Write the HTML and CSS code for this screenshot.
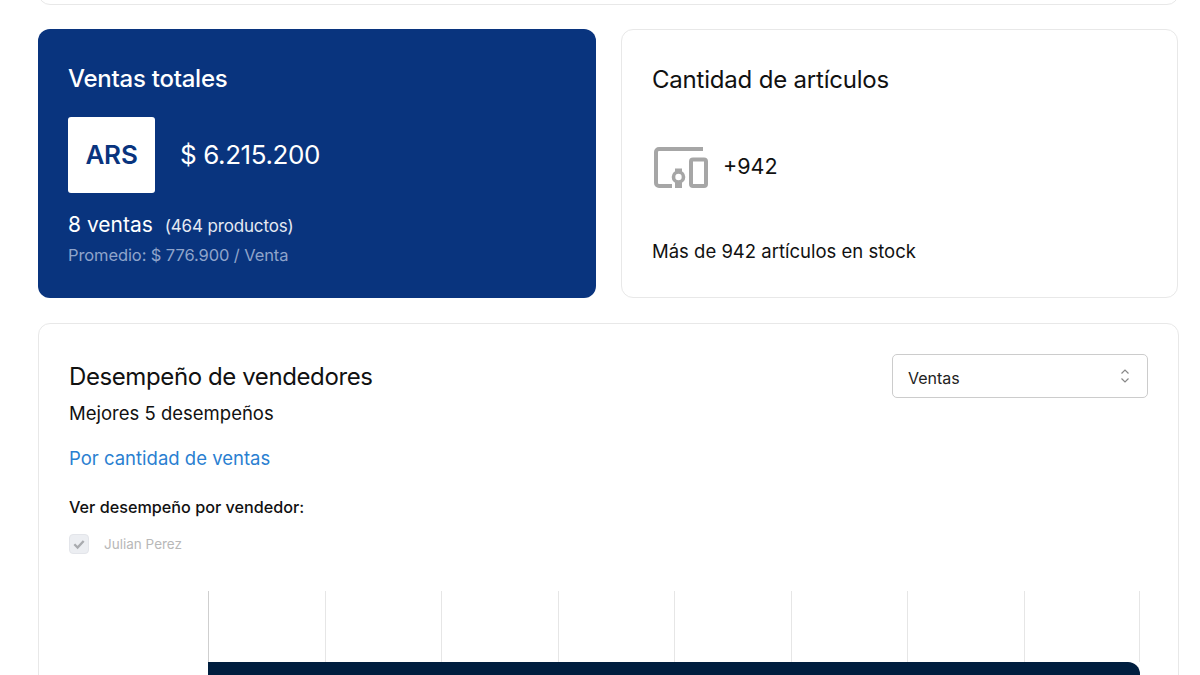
FILE: index.html
```html
<!DOCTYPE html>
<html lang="es">

<head>
    <meta charset="UTF-8" />
    <meta name="viewport" content="width=device-width, initial-scale=1.0" />
    <title>Dashboard</title>
    <link rel="stylesheet" href="styles.css">
</head>

<body>
    <div class="page">
        <!-- Card cut off by the top of the window -->
        <div class="card top-card"></div>

        <div class="summary-row">
            <div class="card sales-card">
                <h2 class="sales-title">Ventas totales</h2>
                <div class="sales-amount">
                    <div class="currency-box">ARS</div>
                    <span class="amount">$ 6.215.200</span>
                </div>
                <p class="sales-count">8 ventas <span class="sales-products">(464 productos)</span></p>
                <p class="sales-average">Promedio: $ 776.900 / Venta</p>
            </div>

            <div class="card stock-card">
                <h2 class="stock-title">Cantidad de artículos</h2>
                <div class="stock-amount">
                    <svg class="stock-icon" viewBox="0 0 54 41" width="54" height="41" aria-hidden="true">
                        <path d="M49 2H5a3 3 0 0 0-3 3v31a3 3 0 0 0 3 3h13" fill="none" stroke="#a6a6a6" stroke-width="4" />
                        <rect x="37" y="12.5" width="15" height="26.5" rx="2" fill="none" stroke="#a6a6a6" stroke-width="4" />
                        <circle cx="24.5" cy="30" r="5" fill="none" stroke="#a6a6a6" stroke-width="3.6" />
                        <rect x="21" y="21.5" width="7" height="4" fill="#a6a6a6" />
                        <rect x="21" y="35" width="7" height="6" fill="#a6a6a6" />
                    </svg>
                    <span class="stock-count">+942</span>
                </div>
                <p class="stock-text">Más de 942 artículos en stock</p>
            </div>
        </div>

        <div class="card sellers-card">
            <div class="sellers-header">
                <div>
                    <h2 class="sellers-title">Desempeño de vendedores</h2>
                    <p class="sellers-subtitle">Mejores 5 desempeños</p>
                </div>
                <div class="select-box">
                    <span class="select-value">Ventas</span>
                    <svg viewBox="0 0 10 16" width="10" height="16" aria-hidden="true">
                        <path d="M1.5 5.5 5 2l3.5 3.5M1.5 10.5 5 14l3.5-3.5" fill="none" stroke="#888" stroke-width="1.2" />
                    </svg>
                </div>
            </div>

            <a class="sellers-link" href="#">Por cantidad de ventas</a>

            <p class="filter-label">Ver desempeño por vendedor:</p>
            <label class="filter-option">
                <span class="checkbox">
                    <svg viewBox="0 0 12 12" width="14" height="14" aria-hidden="true">
                        <path d="M2 6.2 4.8 9 10 3.4" fill="none" stroke="#a9abaf" stroke-width="2" />
                    </svg>
                </span>
                Julian Perez
            </label>

            <div class="chart">
                <div class="chart-cell"></div>
                <div class="chart-cell"></div>
                <div class="chart-cell"></div>
                <div class="chart-cell"></div>
                <div class="chart-cell"></div>
                <div class="chart-cell"></div>
                <div class="chart-cell"></div>
                <div class="chart-cell chart-cell-last"></div>
                <div class="chart-bar"></div>
            </div>
        </div>
    </div>
</body>

</html>
```

FILE: styles.css
```css
html,
body {
    height: 675px;
    overflow: hidden;
}

body {
    margin: 0;
    font-family: Inter, "Open Sans", Arial, sans-serif;
    background-color: white;
    color: #111;
}

h2,
p {
    margin: 0;
    font-weight: 400;
}

.page {
    padding: 0 21px 0 38px;
}

.card {
    box-sizing: border-box;
    border: 1px solid #e8e8e8;
    border-radius: 12px;
    background-color: white;
}

.top-card {
    height: 30px;
    margin-top: -25px;
    margin-bottom: 24px;
}

.summary-row {
    display: grid;
    grid-template-columns: 558px 557px;
    gap: 25px;
    margin-bottom: 25px;
}

/* Ventas totales */
.sales-card {
    height: 269px;
    padding: 36px 30px 0;
    border: none;
    background-color: #09347e;
    color: white;
}

.sales-title {
    font-size: 24px;
    line-height: 28px;
    font-weight: 500;
    letter-spacing: -0.25px;
}

.sales-amount {
    display: flex;
    align-items: center;
    gap: 25px;
    margin-top: 24px;
}

.currency-box {
    width: 87px;
    height: 76px;
    border-radius: 3px;
    background-color: white;
    color: #09347e;
    font-size: 26px;
    font-weight: 600;
    line-height: 76px;
    text-align: center;
    letter-spacing: -0.2px;
}

.amount {
    margin-top: -2px;
    font-size: 26px;
    letter-spacing: -0.4px;
}

.sales-count {
    margin-top: 19px;
    font-size: 21px;
    line-height: 26px;
}

.sales-products {
    margin-left: 6px;
    font-size: 17px;
    color: #e4e9f3;
    letter-spacing: -0.15px;
}

.sales-average {
    margin-top: 5px;
    font-size: 16.5px;
    line-height: 22px;
    color: #8fa4cb;
    letter-spacing: -0.1px;
}

/* Cantidad de articulos */
.stock-card {
    height: 269px;
    padding: 36px 30px 0;
}

.stock-title {
    font-size: 24px;
    line-height: 28px;
    font-weight: 400;
    letter-spacing: -0.2px;
}

.stock-amount {
    display: flex;
    align-items: center;
    gap: 15px;
    margin-top: 53px;
    margin-left: 2px;
    font-size: 21.5px;
}

.stock-count {
    margin-bottom: 4px;
}

.stock-text {
    margin-top: 50px;
    font-size: 18.5px;
    line-height: 26px;
}

/* Desempeno de vendedores */
.sellers-card {
    height: 500px;
    padding: 30px 30px 0;
}

.sellers-header {
    display: flex;
    justify-content: space-between;
    align-items: flex-start;
}

.sellers-title {
    margin-top: 8px;
    font-size: 24px;
    line-height: 30px;
    letter-spacing: -0.4px;
}

.sellers-subtitle {
    margin-top: 9px;
    font-size: 18.5px;
    line-height: 24px;
}

.select-box {
    box-sizing: border-box;
    display: flex;
    justify-content: space-between;
    align-items: center;
    width: 256px;
    height: 44px;
    padding: 0 17px 0 15px;
    border: 1px solid #ccc;
    border-radius: 5px;
    font-size: 16px;
    color: #222;
}

.select-value {
    margin-top: 3px;
}

.sellers-link {
    display: block;
    margin-top: 21px;
    font-size: 18.5px;
    line-height: 24px;
    color: #2a7fd1;
    text-decoration: none;
}

.filter-label {
    margin-top: 26px;
    font-size: 16.2px;
    line-height: 22px;
    font-weight: 500;
}

.filter-option {
    display: flex;
    align-items: center;
    gap: 15px;
    margin-top: 16px;
    font-size: 13.5px;
    line-height: 20px;
    color: #b8b8b8;
}

.checkbox {
    box-sizing: border-box;
    display: flex;
    align-items: center;
    justify-content: center;
    width: 20px;
    height: 20px;
    border: 1px solid #e3e5ea;
    border-radius: 4px;
    background-color: #eceef2;
}

.chart {
    display: grid;
    grid-template-columns: repeat(8, 116.5px);
    margin: 37px 0 0 139px;
}

.chart-cell {
    height: 71px;
    border-left: 1px solid #e6e6e6;
}

.chart-cell:first-child {
    border-left-color: #cfcfcf;
}

.chart-cell-last {
    border-right: 1px solid #e6e6e6;
}

.chart-bar {
    grid-column: 1 / -1;
    height: 60px;
    border-radius: 0 12px 0 0;
    background-color: #001e3f;
}
```
